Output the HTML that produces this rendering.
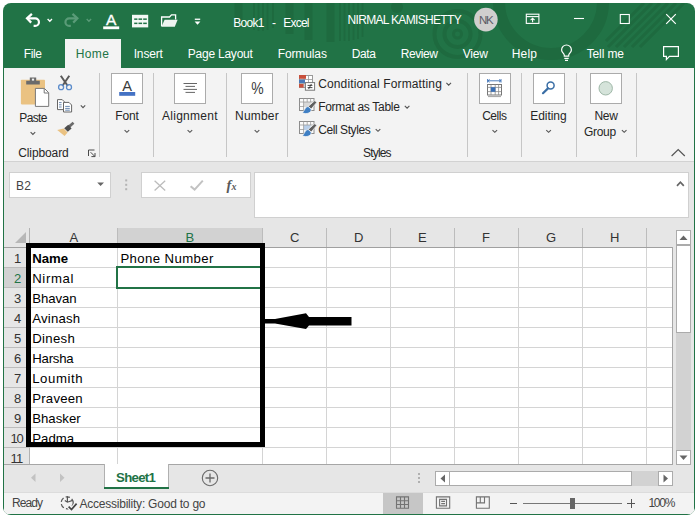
<!DOCTYPE html>
<html lang="en">
<head>
<meta charset="utf-8">
<title>Book1 - Excel</title>
<style>
html,body{margin:0;padding:0;background:#fff;}
body{width:698px;height:520px;overflow:hidden;position:relative;font-family:"Liberation Sans",sans-serif;}
#page{position:absolute;left:0;top:0;width:698px;height:520px;overflow:hidden;}
#page div,#page span,#page svg{position:absolute;}
.t{white-space:pre;line-height:1;font-family:"Liberation Sans",sans-serif;}
.sep{width:1px;background:#c6c6c6;top:73px;height:84px;}
.ibox{background:#fff;border:1px solid #ababab;box-sizing:border-box;width:32px;height:31px;top:73px;}
.gl{background:#d4d4d4;}
</style>
</head>
<body>
<div id="page">
<!-- window frame -->
<div style="left:3px;top:3px;width:692px;height:512px;border-radius:8px;background:#217346;overflow:hidden;">
  <!-- title decorations -->
  <svg style="left:0;top:0" width="692" height="65" viewBox="3 3 692 65">
    <g fill="none" stroke="#1e6a3f">
      <path d="M238.5 3V28M289.5 3V34M308.5 3V40M330.5 3V42" stroke-width="8"/>
      <path d="M254 3V30M258.5 3V31M263 3V31M267.5 3V30M273 3V28" stroke-width="1.8"/>
      <path d="M340 3V41M344.5 3V41M349 3V41M353.5 3V40M358 3V39M362.5 3V37" stroke-width="1.8"/>
      <circle cx="457.5" cy="34" r="13" stroke-width="4"/>
      <circle cx="457.5" cy="34" r="23" stroke-width="4"/>
      <circle cx="457.5" cy="34" r="4" stroke-width="3"/>
      <circle cx="551" cy="2" r="52" stroke-width="12"/>
      <path d="M652 3L608 47M660 3L616 47M668 3L624 47M676 3L632 47M684 3L640 47M644 3L606 41" stroke-width="3"/>
    </g>
    <circle cx="397" cy="7" r="6" fill="#1e6a3f"/>
  </svg>
  <!-- ribbon bg -->
  <div style="left:1px;top:65px;width:690px;height:94px;background:#f3f3f3;"></div>
  <!-- home tab -->
  <div style="left:62px;top:36px;width:56px;height:30px;background:#f3f3f3;"></div>
  <!-- ribbon bottom line -->
  <div style="left:1px;top:158px;width:690px;height:1px;background:#d2d2d2;"></div>
  <!-- formula/grid area bg -->
  <div style="left:1px;top:159px;width:690px;height:331px;background:#e6e6e6;"></div>
  <!-- status bar -->
  <div style="left:1px;top:490px;width:690px;height:21px;background:#f3f3f3;"></div>
  <div style="left:1px;top:489px;width:690px;height:1px;background:#dcdcdc;"></div>
</div>
<!-- ribbon separators -->
<div class="sep" style="left:99px"></div>
<div class="sep" style="left:153px"></div>
<div class="sep" style="left:226px"></div>
<div class="sep" style="left:287px"></div>
<div class="sep" style="left:467px"></div>
<div class="sep" style="left:521px"></div>
<div class="sep" style="left:576px"></div>
<div class="sep" style="left:636px"></div>
<!-- icon boxes -->
<div class="ibox" style="left:111px"></div>
<div class="ibox" style="left:174px"></div>
<div class="ibox" style="left:241px"></div>
<div class="ibox" style="left:479px"></div>
<div class="ibox" style="left:533px"></div>
<div class="ibox" style="left:590px"></div>
<!-- name box -->
<div style="left:9px;top:172px;width:102px;height:26px;background:#fff;border:1px solid #d0d0d0;box-sizing:border-box;"></div>
<!-- fx buttons box -->
<div style="left:141px;top:172px;width:110px;height:26px;background:#fff;border:1px solid #d0d0d0;box-sizing:border-box;"></div>
<!-- formula input -->
<div style="left:254px;top:172px;width:435px;height:46px;background:#fff;border:1px solid #d0d0d0;box-sizing:border-box;"></div>
<!-- title bar icons -->
<svg style="left:0;top:0" width="698" height="68" viewBox="0 0 698 68">
  <!-- undo -->
  <g fill="none" stroke="#fff" stroke-width="2.2" stroke-linecap="butt" stroke-linejoin="miter">
    <path d="M31.9 13.9L27 18.4L31.2 22.6"/>
    <path d="M27.6 18.4H35.2A3.75 3.75 0 0 1 35.2 25.9H33.6"/>
  </g>
  <path d="M47.6 19L49.8 21.3L52 19" fill="none" stroke="#fff" stroke-width="1.3"/>
  <!-- redo (dim) -->
  <g fill="none" stroke="#5a9b78" stroke-width="2.2">
    <path d="M72.5 13.9L77.4 18.4L73.2 22.6"/>
    <path d="M76.8 18.4H69.2A3.75 3.75 0 0 0 69.2 25.9H70.8"/>
  </g>
  <path d="M86.7 19L88.9 21.3L91.1 19" fill="none" stroke="#5a9b78" stroke-width="1.3"/>
  <!-- font color A -->
  <text x="111.2" y="24.6" font-family="Liberation Sans, sans-serif" font-size="15.5" fill="#fff" stroke="#fff" stroke-width="0.35" text-anchor="middle">A</text>
  <rect x="103.2" y="26.4" width="16" height="2.8" fill="#fff"/>
  <!-- table -->
  <rect x="132" y="14.8" width="16.2" height="12.6" fill="#f4f8f5"/>
  <g fill="#217346">
    <rect x="134.2" y="18.4" width="3.2" height="1.5"/><rect x="138.5" y="18.4" width="3.6" height="1.5"/><rect x="143.2" y="18.4" width="3.6" height="1.5"/>
    <rect x="134.2" y="22.6" width="3.2" height="1.5"/><rect x="138.5" y="22.6" width="3.6" height="1.5"/><rect x="143.2" y="22.6" width="3.6" height="1.5"/>
  </g>
  <!-- folder -->
  <path d="M161.6 26.3V17H169.5L171.5 14.9H175.6V19.5" fill="none" stroke="#fff" stroke-width="1.3"/>
  <path d="M161.4 26.8L164.6 19.8H177.6L174.8 26.8Z" fill="#eef4f0"/>
  <!-- customize QAT -->
  <rect x="194.8" y="18.6" width="5.4" height="1.3" fill="#fff"/>
  <path d="M194.6 21.6H200.4L197.5 24.7Z" fill="#fff"/>
  <!-- account circle -->
  <circle cx="485.9" cy="19.6" r="11.8" fill="#d0cfce"/>
  <!-- ribbon display options -->
  <g fill="none" stroke="#fff" stroke-width="1.1">
    <rect x="526.3" y="14.2" width="12.6" height="9.2"/>
    <path d="M526.3 16.6H538.9"/>
    <path d="M532.6 22.2V18.4M530.6 20.2L532.6 18.2L534.6 20.2"/>
  </g>
  <!-- window buttons -->
  <path d="M574 18.5H584" stroke="#fff" stroke-width="1.1"/>
  <rect x="620.3" y="14.5" width="9" height="9" fill="none" stroke="#fff" stroke-width="1.1"/>
  <path d="M666.2 14.2L675.8 23.8M675.8 14.2L666.2 23.8" stroke="#fff" stroke-width="1.2"/>
  <!-- tell me bulb -->
  <g fill="none" stroke="#fff" stroke-width="1.2">
    <path d="M564.3 56.2V55.2C564.3 53.6 561.6 52.4 561.6 49.9A4.9 4.9 0 0 1 571.4 49.9C571.4 52.4 568.7 53.6 568.7 55.2V56.2Z"/>
    <path d="M564.3 58.3H568.7M565 60.3H568"/>
  </g>
  <!-- comments -->
  <path d="M663.6 46.6H678.4V56.4H669.4L666.4 59.6V56.4H663.6Z" fill="none" stroke="#fff" stroke-width="1.2"/>
</svg>
<!-- ribbon icons -->
<svg style="left:0;top:68px" width="698" height="94" viewBox="0 68 698 94">
  <!-- paste -->
  <rect x="20.9" y="79.8" width="24.1" height="24.6" rx="0.8" fill="#eac282"/>
  <path d="M26.2 84.4V80.8H29.8V77.4H36.2V80.8H39.8V84.4Z" fill="#6b6b6b"/>
  <rect x="31.9" y="78.6" width="2.2" height="2" fill="#f3f3f3"/>
  <path d="M35.4 88.4H44.4L48.7 92.7V106.4H35.4Z" fill="#fff" stroke="#777" stroke-width="1"/>
  <path d="M44.2 88.6V93H48.6" fill="none" stroke="#777" stroke-width="1"/>
  <path d="M30.6 132.2L32.9 134.4L35.2 132.2" fill="none" stroke="#555" stroke-width="1.15"/>
  <!-- scissors -->
  <path d="M60.8 75.8L67.8 86M69.3 75.8L62.3 86" stroke="#595959" stroke-width="2" fill="none"/>
  <circle cx="61.1" cy="87.2" r="2.5" fill="none" stroke="#5b8ccb" stroke-width="1.3"/>
  <circle cx="69" cy="87.2" r="2.5" fill="none" stroke="#5b8ccb" stroke-width="1.3"/>
  <!-- copy -->
  <path d="M57.5 99.6H62.2L64.2 101.6V109.6H57.5Z" fill="#fff" stroke="#666" stroke-width="1"/>
  <path d="M59 102.6H61.6M59 104.8H61.6M59 107H61.6" stroke="#5a7da8" stroke-width="0.9"/>
  <path d="M63.5 102.4H69L71.6 105V112H63.5Z" fill="#fff" stroke="#666" stroke-width="1"/>
  <path d="M65.2 106.4H69.8M65.2 108.4H69.8M65.2 110.2H69.8" stroke="#5a7da8" stroke-width="0.9"/>
  <path d="M80.8 105.4L83 107.6L85.2 105.4" fill="none" stroke="#555" stroke-width="1.15"/>
  <!-- format painter -->
  <path d="M72.6 121.8L74.4 123.8L70 127.8L68 125.8Z" fill="#6b6b6b"/>
  <path d="M68.2 124.8L71.6 128.4L67.8 131.8L64.2 128.2Z" fill="#4d4d4d"/>
  <path d="M63.6 128.4L67.6 132.4L64.6 136L57.2 130Z" fill="#eac282"/>
  <!-- dialog launcher -->
  <path d="M88.5 156V150H94.5" fill="none" stroke="#4a4a4a" stroke-width="1"/>
  <path d="M90.6 152.2L94.8 156.4M95 153V156.6H91.4" fill="none" stroke="#4a4a4a" stroke-width="1"/>
<!-- font A -->
<text x="127.2" y="90.7" font-family="Liberation Sans, sans-serif" font-size="15" fill="#3b3b3b" text-anchor="middle" textLength="9.8" lengthAdjust="spacingAndGlyphs">A</text>
<rect x="119.2" y="92" width="16" height="3.8" fill="#4472c4"/>
<!-- alignment -->
<path d="M183.5 83.5H197M185.5 86.4H195M183.5 89.4H197M185.5 92.4H195" stroke="#666" stroke-width="1"/>
<!-- percent -->
<text x="257.4" y="94" font-family="Liberation Sans, sans-serif" font-size="16" fill="#3b3b3b" text-anchor="middle" textLength="12.4" lengthAdjust="spacingAndGlyphs">%</text>
<path d="M124.60000000000001 130.1L126.9 132.29999999999998L129.20000000000002 130.1" fill="none" stroke="#555" stroke-width="1.15"/>
<path d="M187.6 130.1L189.9 132.29999999999998L192.20000000000002 130.1" fill="none" stroke="#555" stroke-width="1.15"/>
<path d="M254.7 130.1L257.0 132.29999999999998L259.3 130.1" fill="none" stroke="#555" stroke-width="1.15"/>
<path d="M492.5 130.1L494.8 132.29999999999998L497.1 130.1" fill="none" stroke="#555" stroke-width="1.15"/>
<path d="M546.3000000000001 130.1L548.6 132.29999999999998L550.9 130.1" fill="none" stroke="#555" stroke-width="1.15"/>
<path d="M621.9000000000001 130.1L624.2 132.29999999999998L626.5 130.1" fill="none" stroke="#555" stroke-width="1.15"/>
<path d="M446.4 82.9L448.7 85.1L451.0 82.9" fill="none" stroke="#555" stroke-width="1.15"/>
<path d="M404.8 105.9L407.1 108.1L409.40000000000003 105.9" fill="none" stroke="#555" stroke-width="1.15"/>
<path d="M375.7 129.1L378 131.29999999999998L380.3 129.1" fill="none" stroke="#555" stroke-width="1.15"/>
<!-- cond fmt -->
<rect x="299.5" y="75.5" width="13" height="12" fill="#fff" stroke="#9a9a9a" stroke-width="1"/>
<path d="M304 75.5V87.5M308.5 75.5V87.5M299.5 79.5H312.5M299.5 83.5H312.5" stroke="#9a9a9a" stroke-width="0.8" fill="none"/>
<rect x="299" y="75" width="7" height="3.8" fill="#c8503c"/>
<rect x="299" y="79.6" width="6" height="3.5" fill="#4a78b8"/>
<rect x="299" y="84" width="4.6" height="3.6" fill="#c8503c"/>
<rect x="305.4" y="82.6" width="9.2" height="7.6" fill="#fff" stroke="#777" stroke-width="1"/>
<path d="M307.6 85.4H312.4M307.6 87.6H312.4M311.4 84L308.6 89" stroke="#333" stroke-width="0.9" fill="none"/>
<rect x="299.5" y="98.5" width="14.5" height="12" fill="#fbfbfb" stroke="#8c8c8c" stroke-width="1"/>
<rect x="303.6" y="102" width="7" height="5" fill="#d9d9d9"/>
<path d="M303.6 98.5V110.5M307.2 98.5V102M310.6 98.5V102M299.5 102H314M299.5 106.5H304" stroke="#9c9c9c" stroke-width="0.8" fill="none"/>
<path d="M314.8 100.6L316.8 102.4L311.2 109L308.2 106.4Z" fill="#5f5f5f" stroke="#f3f3f3" stroke-width="0.8"/>
<path d="M308.2 106.6C305.4 106.4 305 110 302.4 112.8C306.6 114.8 311.6 112.8 311.2 109Z" fill="#3f7fc4" stroke="#f3f3f3" stroke-width="0.8"/>
<rect x="299.5" y="121.5" width="14.5" height="12" fill="#fbfbfb" stroke="#8c8c8c" stroke-width="1"/>
<rect x="303.6" y="125" width="7" height="5" fill="#b8cfea"/>
<path d="M303.6 121.5V133.5M307.2 121.5V125M310.6 121.5V125M299.5 125H314M299.5 129.5H304" stroke="#9c9c9c" stroke-width="0.8" fill="none"/>
<path d="M314.8 123.6L316.8 125.4L311.2 132L308.2 129.4Z" fill="#5f5f5f" stroke="#f3f3f3" stroke-width="0.8"/>
<path d="M308.2 129.6C305.4 129.4 305 133 302.4 135.8C306.6 137.8 311.6 135.8 311.2 132Z" fill="#3f7fc4" stroke="#f3f3f3" stroke-width="0.8"/>
<!-- cells -->
<rect x="487.5" y="84.5" width="14" height="10.5" fill="#fff" stroke="#777" stroke-width="1"/>
<path d="M491 84.5V95M495.2 84.5V95M498.6 84.5V95M487.5 87.4H501.5M487.5 91.6H501.5" stroke="#8a8a8a" stroke-width="0.8" fill="none"/>
<rect x="490.8" y="87.2" width="4.6" height="4.6" fill="#3a6fb5"/>
<path d="M487.6 80.8H501M487.6 79V82.6M501 79V82.6M489.6 79.4L488 80.8L489.6 82.2M499 79.4L500.6 80.8L499 82.2" stroke="#3a6fb5" stroke-width="0.9" fill="none"/>
<path d="M488 96.6H501" stroke="#8a8a8a" stroke-width="0.8"/>
<circle cx="550.6" cy="85.6" r="3.5" fill="none" stroke="#3a6ea5" stroke-width="1.5"/>
<path d="M548 88.4L543 93.2" stroke="#3a6ea5" stroke-width="2.2" stroke-linecap="round"/>
<circle cx="605.7" cy="88.3" r="6.7" fill="#d5e3da" stroke="#9fb8a8" stroke-width="1"/>
<path d="M671.6 156L678.2 149.6L684.8 156" fill="none" stroke="#555" stroke-width="1.2"/>
</svg>
<!-- formula bar icons -->
<svg style="left:0;top:165px" width="698" height="60" viewBox="0 165 698 60">
  <path d="M97.2 182.6H104L100.6 186Z" fill="#666"/>
  <rect x="125.2" y="179.4" width="2" height="2" fill="#b4b4b4"/>
  <rect x="125.2" y="183.8" width="2" height="2" fill="#b4b4b4"/>
  <rect x="125.2" y="188.2" width="2" height="2" fill="#b4b4b4"/>
  <path d="M154.6 180.8L165.2 190.4M165.2 180.8L154.6 190.4" stroke="#bcbcbc" stroke-width="1.3" fill="none"/>
  <path d="M190.6 186.2L194.6 189.6L202.8 180.6" stroke="#c2c2c2" stroke-width="2" fill="none"/>
  <text x="226.6" y="189.6" font-family="Liberation Serif, serif" font-style="italic" font-weight="700" font-size="14.5" fill="#595959">f</text>
  <text x="231.6" y="190" font-family="Liberation Serif, serif" font-style="italic" font-weight="700" font-size="10" fill="#595959">x</text>
  <path d="M677 185.8L680.4 182.2L683.8 185.8" fill="none" stroke="#666" stroke-width="1.7"/>
</svg>
<!-- grid -->
<div style="left:30px;top:248px;width:642px;height:216px;background:#fff;"></div>
<div style="left:117px;top:228px;width:145px;height:19px;background:#d2d2d2;"></div>
<div style="left:4px;top:268px;width:26px;height:19px;background:#d2d2d2;"></div>
<div style="left:4px;top:247px;width:669px;height:1px;background:#a0a0a0;"></div>
<div style="left:29px;top:228px;width:1px;height:236px;background:#b2b2b2;"></div>
<div style="left:117px;top:228px;width:1px;height:19px;background:#bcbcbc;"></div>
<div style="left:262px;top:228px;width:1px;height:19px;background:#bcbcbc;"></div>
<div style="left:326px;top:228px;width:1px;height:19px;background:#bcbcbc;"></div>
<div style="left:390px;top:228px;width:1px;height:19px;background:#bcbcbc;"></div>
<div style="left:454px;top:228px;width:1px;height:19px;background:#bcbcbc;"></div>
<div style="left:518px;top:228px;width:1px;height:19px;background:#bcbcbc;"></div>
<div style="left:582px;top:228px;width:1px;height:19px;background:#bcbcbc;"></div>
<div style="left:646px;top:228px;width:1px;height:19px;background:#bcbcbc;"></div>
<div style="left:4px;top:267px;width:26px;height:1px;background:#bcbcbc;"></div>
<div class="gl" style="left:30px;top:267px;width:642px;height:1px;"></div>
<div style="left:4px;top:287px;width:26px;height:1px;background:#bcbcbc;"></div>
<div class="gl" style="left:30px;top:287px;width:642px;height:1px;"></div>
<div style="left:4px;top:307px;width:26px;height:1px;background:#bcbcbc;"></div>
<div class="gl" style="left:30px;top:307px;width:642px;height:1px;"></div>
<div style="left:4px;top:327px;width:26px;height:1px;background:#bcbcbc;"></div>
<div class="gl" style="left:30px;top:327px;width:642px;height:1px;"></div>
<div style="left:4px;top:347px;width:26px;height:1px;background:#bcbcbc;"></div>
<div class="gl" style="left:30px;top:347px;width:642px;height:1px;"></div>
<div style="left:4px;top:367px;width:26px;height:1px;background:#bcbcbc;"></div>
<div class="gl" style="left:30px;top:367px;width:642px;height:1px;"></div>
<div style="left:4px;top:387px;width:26px;height:1px;background:#bcbcbc;"></div>
<div class="gl" style="left:30px;top:387px;width:642px;height:1px;"></div>
<div style="left:4px;top:407px;width:26px;height:1px;background:#bcbcbc;"></div>
<div class="gl" style="left:30px;top:407px;width:642px;height:1px;"></div>
<div style="left:4px;top:427px;width:26px;height:1px;background:#bcbcbc;"></div>
<div class="gl" style="left:30px;top:427px;width:642px;height:1px;"></div>
<div style="left:4px;top:447px;width:26px;height:1px;background:#bcbcbc;"></div>
<div class="gl" style="left:30px;top:447px;width:642px;height:1px;"></div>
<div class="gl" style="left:117px;top:248px;width:1px;height:216px;"></div>
<div class="gl" style="left:262px;top:248px;width:1px;height:216px;"></div>
<div class="gl" style="left:326px;top:248px;width:1px;height:216px;"></div>
<div class="gl" style="left:390px;top:248px;width:1px;height:216px;"></div>
<div class="gl" style="left:454px;top:248px;width:1px;height:216px;"></div>
<div class="gl" style="left:518px;top:248px;width:1px;height:216px;"></div>
<div class="gl" style="left:582px;top:248px;width:1px;height:216px;"></div>
<div class="gl" style="left:646px;top:248px;width:1px;height:216px;"></div>
<div style="left:672px;top:247px;width:1px;height:218px;background:#a6a6a6;"></div>
<div style="left:4px;top:464px;width:100px;height:1px;background:#a6a6a6;"></div>
<div style="left:169px;top:464px;width:504px;height:1px;background:#a6a6a6;"></div>
<svg style="left:14px;top:231px" width="13" height="13" viewBox="0 0 13 13"><path d="M12 1V12H1Z" fill="#b7b7b7"/></svg>
<div style="left:116px;top:266px;width:147px;height:23px;border:2px solid #217346;box-sizing:border-box;"></div>
<div style="left:26px;top:243px;width:239px;height:204px;border:5px solid #000;box-sizing:border-box;"></div>
<svg style="left:262px;top:308px" width="94" height="26" viewBox="262 308 94 26"><path d="M264 319H275L306 313.2L309 317H351.5V325.5H309L306 329L275 323.5H264Z" fill="#000"/></svg>
<!-- vertical scrollbar -->
<div style="left:676px;top:230px;width:15px;height:234px;background:#d2d2d2;"></div>
<div style="left:676px;top:230px;width:15px;height:15px;background:#fff;border:1px solid #ababab;box-sizing:border-box;"></div>
<div style="left:676px;top:245px;width:15px;height:88px;background:#fff;border:1px solid #ababab;box-sizing:border-box;"></div>
<div style="left:676px;top:450px;width:15px;height:15px;background:#fff;border:1px solid #ababab;box-sizing:border-box;"></div>
<svg style="left:676px;top:230px" width="15" height="15" viewBox="0 0 15 15"><path d="M3.5 10L7.5 5.5L11.5 10Z" fill="#666"/></svg>
<svg style="left:676px;top:450px" width="15" height="15" viewBox="0 0 15 15"><path d="M3.5 5.5L7.5 10L11.5 5.5Z" fill="#666"/></svg>
<!-- sheet tab bar -->
<div style="left:104px;top:464px;width:65px;height:25px;background:#fff;"></div>
<div style="left:104px;top:487px;width:65px;height:2px;background:#217346;"></div>
<div style="left:104px;top:464px;width:1px;height:23px;background:#b0b0b0;"></div>
<div style="left:168px;top:464px;width:1px;height:23px;background:#b0b0b0;"></div>
<svg style="left:28px;top:470px" width="40" height="16" viewBox="28 470 40 16"><path d="M35.5 473.5V482L31 477.7Z M60 473.5V482L64.5 477.7Z" fill="#c2c2c2"/></svg>
<svg style="left:200px;top:468px" width="20" height="20" viewBox="0 0 20 20"><circle cx="10" cy="10" r="7.7" fill="none" stroke="#6a6a6a" stroke-width="1.1"/><path d="M10 5.5V14.5M5.5 10H14.5" stroke="#6a6a6a" stroke-width="1.3"/></svg>
<!-- horizontal scrollbar -->
<div style="left:418px;top:473px;width:2px;height:2px;background:#b0b0b0;"></div>
<div style="left:418px;top:477px;width:2px;height:2px;background:#b0b0b0;"></div>
<div style="left:418px;top:481px;width:2px;height:2px;background:#b0b0b0;"></div>
<div style="left:435px;top:471px;width:238px;height:15px;background:#d2d2d2;"></div>
<div style="left:435px;top:471px;width:15px;height:15px;background:#fff;border:1px solid #ababab;box-sizing:border-box;"></div>
<div style="left:449px;top:471px;width:183px;height:15px;background:#fff;border:1px solid #ababab;box-sizing:border-box;"></div>
<div style="left:658px;top:471px;width:15px;height:15px;background:#fff;border:1px solid #ababab;box-sizing:border-box;"></div>
<svg style="left:435px;top:471px" width="15" height="15" viewBox="0 0 15 15"><path d="M10 3.5L5.5 7.5L10 11.5Z" fill="#666"/></svg>
<svg style="left:658px;top:471px" width="15" height="15" viewBox="0 0 15 15"><path d="M5.5 3.5L10 7.5L5.5 11.5Z" fill="#666"/></svg>
<!-- status bar right -->
<div style="left:383px;top:493px;width:40px;height:21px;background:#c6c6c6;"></div>
<svg style="left:395px;top:495px" width="16" height="16" viewBox="395 495 16 16"><path d="M396.5 496.9H408.5V508.3H396.5ZM396.5 500.7H408.5M396.5 504.5H408.5M400.5 496.9V508.3M404.5 496.9V508.3" fill="none" stroke="#737373" stroke-width="1.1"/></svg>
<svg style="left:435px;top:495px" width="17" height="16" viewBox="435 495 17 16"><path d="M436.4 496.9H449.7V508.3H436.4Z M439.6 499.4H446.5V505.9H439.6Z M441.2 501.4H445M441.2 503.6H445" fill="none" stroke="#737373" stroke-width="1.1"/></svg>
<svg style="left:475px;top:495px" width="17" height="16" viewBox="475 495 17 16"><path d="M476.4 496.9H489.3V508.3H476.4Z M476.4 502.9H484.5V496.9M480.3 496.9V502.9" fill="none" stroke="#737373" stroke-width="1.1"/></svg>
<div style="left:510px;top:503px;width:7px;height:1px;background:#555;"></div>
<div style="left:523px;top:503px;width:99px;height:1px;background:#777;"></div>
<div style="left:570px;top:498px;width:5px;height:11px;background:#666;"></div>
<div style="left:627px;top:503px;width:8px;height:1px;background:#555;"></div>
<div style="left:630.5px;top:499px;width:1px;height:9px;background:#555;"></div>
<!-- accessibility icon -->
<svg style="left:59px;top:494px" width="20" height="18" viewBox="59 494 20 18">
  <circle cx="67.2" cy="502.8" r="6" fill="none" stroke="#555" stroke-width="1.2" stroke-dasharray="4.4 2.2" stroke-dashoffset="0.5"/>
  <path d="M67.4 496.2V502M64.8 500.4L67.4 502.2L72.6 500.4" stroke="#555" stroke-width="1.2" fill="none"/>
  <path d="M68.6 506.6L71.5 509.5L76.6 503.6" stroke="#f3f3f3" stroke-width="4" fill="none"/>
  <path d="M68.6 506.6L71.5 509.5L76.6 503.6" stroke="#444" stroke-width="1.7" fill="none"/>
</svg>

<!-- text -->
<span class="t" style="left:233.3px;top:17.0px;font-size:12px;letter-spacing:-0.70px;color:#fff;">Book1</span>
<span class="t" style="left:272.0px;top:17.0px;font-size:12px;letter-spacing:0.24px;color:#fff;">-</span>
<span class="t" style="left:283.2px;top:17.0px;font-size:12px;letter-spacing:-0.75px;color:#fff;">Excel</span>
<span class="t" style="left:347.5px;top:14.0px;font-size:12px;letter-spacing:-0.67px;color:#fff;">NIRMAL KAMISHETTY</span>
<span class="t" style="left:479.0px;top:14.5px;font-size:11.5px;letter-spacing:-1.20px;color:#5c5c66;">NK</span>
<span class="t" style="left:23.7px;top:47.8px;font-size:12px;letter-spacing:-0.37px;color:#fff;">File</span>
<span class="t" style="left:75.7px;top:47.8px;font-size:12px;letter-spacing:0.41px;color:#217346;">Home</span>
<span class="t" style="left:133.7px;top:47.8px;font-size:12px;letter-spacing:-0.16px;color:#fff;">Insert</span>
<span class="t" style="left:187.7px;top:47.8px;font-size:12px;letter-spacing:-0.22px;color:#fff;">Page Layout</span>
<span class="t" style="left:277.7px;top:47.8px;font-size:12px;letter-spacing:-0.11px;color:#fff;">Formulas</span>
<span class="t" style="left:351.7px;top:47.8px;font-size:12px;letter-spacing:-0.37px;color:#fff;">Data</span>
<span class="t" style="left:400.7px;top:47.8px;font-size:12px;letter-spacing:-0.42px;color:#fff;">Review</span>
<span class="t" style="left:462.7px;top:47.8px;font-size:12px;letter-spacing:-0.19px;color:#fff;">View</span>
<span class="t" style="left:511.7px;top:47.8px;font-size:12px;letter-spacing:0.18px;color:#fff;">Help</span>
<span class="t" style="left:586.7px;top:47.8px;font-size:12px;letter-spacing:-0.13px;color:#fff;">Tell me</span>
<span class="t" style="left:19.3px;top:112.2px;font-size:12px;letter-spacing:-0.66px;color:#262626;">Paste</span>
<span class="t" style="left:18.2px;top:147.1px;font-size:12px;letter-spacing:-0.10px;color:#262626;">Clipboard</span>
<span class="t" style="left:115.3px;top:110.3px;font-size:12px;letter-spacing:-0.19px;color:#262626;">Font</span>
<span class="t" style="left:162.0px;top:110.3px;font-size:12px;letter-spacing:0.27px;color:#262626;">Alignment</span>
<span class="t" style="left:235.1px;top:110.3px;font-size:12px;letter-spacing:0.17px;color:#262626;">Number</span>
<span class="t" style="left:318.2px;top:77.8px;font-size:12px;letter-spacing:0.14px;color:#262626;">Conditional Formatting</span>
<span class="t" style="left:318.2px;top:101.0px;font-size:12px;letter-spacing:-0.30px;color:#262626;">Format as Table</span>
<span class="t" style="left:318.2px;top:124.1px;font-size:12px;letter-spacing:-0.42px;color:#262626;">Cell Styles</span>
<span class="t" style="left:363.1px;top:147.1px;font-size:12px;letter-spacing:-0.83px;color:#262626;">Styles</span>
<span class="t" style="left:482.2px;top:110.3px;font-size:12px;letter-spacing:-0.48px;color:#262626;">Cells</span>
<span class="t" style="left:530.3px;top:110.3px;font-size:12px;letter-spacing:-0.06px;color:#262626;">Editing</span>
<span class="t" style="left:594.4px;top:110.3px;font-size:12px;letter-spacing:-0.29px;color:#262626;">New</span>
<span class="t" style="left:584.1px;top:126.4px;font-size:12px;letter-spacing:-0.33px;color:#262626;">Group</span>
<span class="t" style="left:16.1px;top:179.5px;font-size:12px;letter-spacing:0.15px;color:#444;">B2</span>
<span class="t" style="left:69.5px;top:230.6px;font-size:13px;letter-spacing:-0.71px;color:#333;">A</span>
<span class="t" style="left:185.5px;top:230.6px;font-size:13px;letter-spacing:-0.71px;color:#217346;">B</span>
<span class="t" style="left:290.0px;top:230.6px;font-size:13px;letter-spacing:-1.20px;color:#333;">C</span>
<span class="t" style="left:354.0px;top:230.6px;font-size:13px;letter-spacing:-1.20px;color:#333;">D</span>
<span class="t" style="left:418.0px;top:230.6px;font-size:13px;letter-spacing:-0.71px;color:#333;">E</span>
<span class="t" style="left:482.0px;top:230.6px;font-size:13px;letter-spacing:0.01px;color:#333;">F</span>
<span class="t" style="left:546.0px;top:230.6px;font-size:13px;letter-spacing:-1.20px;color:#333;">G</span>
<span class="t" style="left:610.0px;top:230.6px;font-size:13px;letter-spacing:-1.20px;color:#333;">H</span>
<span class="t" style="left:14.0px;top:252.0px;font-size:13px;letter-spacing:-1.17px;color:#333;">1</span>
<span class="t" style="left:32.2px;top:251.8px;font-size:13.2px;letter-spacing:-0.01px;color:#000;font-weight:700;">Name</span>
<span class="t" style="left:14.0px;top:272.0px;font-size:13px;letter-spacing:-1.17px;color:#217346;">2</span>
<span class="t" style="left:32.2px;top:271.8px;font-size:13.2px;letter-spacing:0.63px;color:#000;">Nirmal</span>
<span class="t" style="left:14.0px;top:292.0px;font-size:13px;letter-spacing:-1.17px;color:#333;">3</span>
<span class="t" style="left:32.2px;top:291.8px;font-size:13.2px;letter-spacing:-0.07px;color:#000;">Bhavan</span>
<span class="t" style="left:14.0px;top:312.0px;font-size:13px;letter-spacing:-1.17px;color:#333;">4</span>
<span class="t" style="left:32.2px;top:311.8px;font-size:13.2px;letter-spacing:0.22px;color:#000;">Avinash</span>
<span class="t" style="left:14.0px;top:332.0px;font-size:13px;letter-spacing:-1.17px;color:#333;">5</span>
<span class="t" style="left:32.2px;top:331.8px;font-size:13.2px;letter-spacing:0.30px;color:#000;">Dinesh</span>
<span class="t" style="left:14.0px;top:352.0px;font-size:13px;letter-spacing:-1.17px;color:#333;">6</span>
<span class="t" style="left:32.2px;top:351.8px;font-size:13.2px;letter-spacing:-0.21px;color:#000;">Harsha</span>
<span class="t" style="left:14.0px;top:372.0px;font-size:13px;letter-spacing:-1.17px;color:#333;">7</span>
<span class="t" style="left:32.2px;top:371.8px;font-size:13.2px;letter-spacing:0.59px;color:#000;">Loumith</span>
<span class="t" style="left:14.0px;top:392.0px;font-size:13px;letter-spacing:-1.17px;color:#333;">8</span>
<span class="t" style="left:32.2px;top:391.8px;font-size:13.2px;letter-spacing:0.23px;color:#000;">Praveen</span>
<span class="t" style="left:14.0px;top:412.0px;font-size:13px;letter-spacing:-1.17px;color:#333;">9</span>
<span class="t" style="left:32.2px;top:411.8px;font-size:13.2px;letter-spacing:0.02px;color:#000;">Bhasker</span>
<span class="t" style="left:10.6px;top:432.0px;font-size:13px;letter-spacing:-1.20px;color:#333;">10</span>
<span class="t" style="left:32.2px;top:431.8px;font-size:13.2px;letter-spacing:0.05px;color:#000;">Padma</span>
<span class="t" style="left:10.6px;top:452.0px;font-size:13px;letter-spacing:-0.74px;color:#333;">11</span>
<span class="t" style="left:120.4px;top:251.8px;font-size:13.2px;letter-spacing:0.39px;color:#000;">Phone Number</span>
<span class="t" style="left:116.1px;top:470.8px;font-size:13.2px;letter-spacing:-0.69px;color:#217346;font-weight:700;">Sheet1</span>
<span class="t" style="left:12.1px;top:497.3px;font-size:12px;letter-spacing:-0.96px;color:#444;">Ready</span>
<span class="t" style="left:79.4px;top:497.6px;font-size:12px;letter-spacing:-0.22px;color:#444;">Accessibility: Good to go</span>
<span class="t" style="left:648.4px;top:497.3px;font-size:12px;letter-spacing:-1.20px;color:#444;">100%</span>
</div>
</body>
</html>
